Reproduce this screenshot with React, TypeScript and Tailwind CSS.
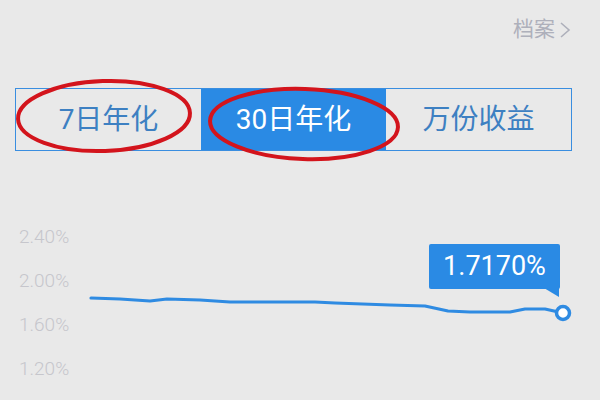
import React from "react";

const tabs = ["7日年化", "30日年化", "万份收益"];
const yLabels = ["2.40%", "2.00%", "1.60%", "1.20%"];

// line points in page coordinates
const points: [number, number][] = [
    [91, 298], [120, 299], [150, 301], [167, 299], [200, 300], [230, 302],
    [315, 302], [335, 303], [390, 305], [425, 306], [448, 311], [470, 312],
    [510, 312], [525, 309], [545, 309], [563, 313],
];

export default function App() {
    const active = 1;
    const d = points.map((p, i) => `${i === 0 ? "M" : "L"}${p[0]} ${p[1]}`).join(" ");

    return (
        <div
            className="relative w-[600px] h-[400px] overflow-hidden bg-[#e9e9e9]"
            style={{ fontFamily: "Roboto, 'Noto Sans CJK SC', sans-serif" }}
        >
            {/* header link */}
            <div className="flex justify-end items-center h-[50px] pt-[10px] pr-[28px] text-[21px] text-[#aeb0bb]">
                <span>档案</span>
                <svg width="14" height="20" viewBox="0 0 14 20" className="ml-[3px]">
                    <path d="M3 3 L11 10 L3 17" fill="none" stroke="#aeb0bb" strokeWidth="1.6" />
                </svg>
            </div>

            {/* segmented tabs */}
            <div className="flex ml-[15px] w-[557px] mt-[38px] h-[63px] border border-[#3a8ee0]">
                {tabs.map((t, i) => (
                    <div
                        key={t}
                        className={`flex-1 flex items-center justify-center text-[28px] ${i === active ? "bg-[#2a8ae4] text-white" : "text-[#3d80c2]"}`}
                    >
                        {t}
                    </div>
                ))}
            </div>

            {/* y axis labels */}
            <div className="flex flex-col mt-[64px] pl-[19px] text-[19px] font-light text-[#c6c6cc]">
                {yLabels.map((l) => (
                    <div key={l} className="h-[44px] flex items-center">
                        {l}
                    </div>
                ))}
            </div>

            {/* chart line + annotations */}
            <svg className="absolute inset-0 pointer-events-none" width="600" height="400" viewBox="0 0 600 400">
                <path d={d} fill="none" stroke="#2f8be2" strokeWidth="3.2" strokeLinejoin="round" strokeLinecap="round" />
                <circle cx="563" cy="313" r="6.5" fill="#ffffff" stroke="#2f8be2" strokeWidth="3.5" />
                <path d="M544 288 L559 288 L559 297 Z" fill="#2a8ae4" />
                <ellipse cx="104" cy="116" rx="86" ry="35" fill="none" stroke="#d3141c" strokeWidth="4" transform="rotate(-2 104 116)" />
                <ellipse cx="304" cy="124" rx="94" ry="35" fill="none" stroke="#d3141c" strokeWidth="4" transform="rotate(2 304 124)" />
            </svg>

            {/* tooltip */}
            <div className="absolute left-[429px] top-[244px] w-[131px] h-[45px] rounded-[2px] bg-[#2a8ae4] flex items-center justify-center text-white text-[27px]">
                1.7170%
            </div>
        </div>
    );
}
